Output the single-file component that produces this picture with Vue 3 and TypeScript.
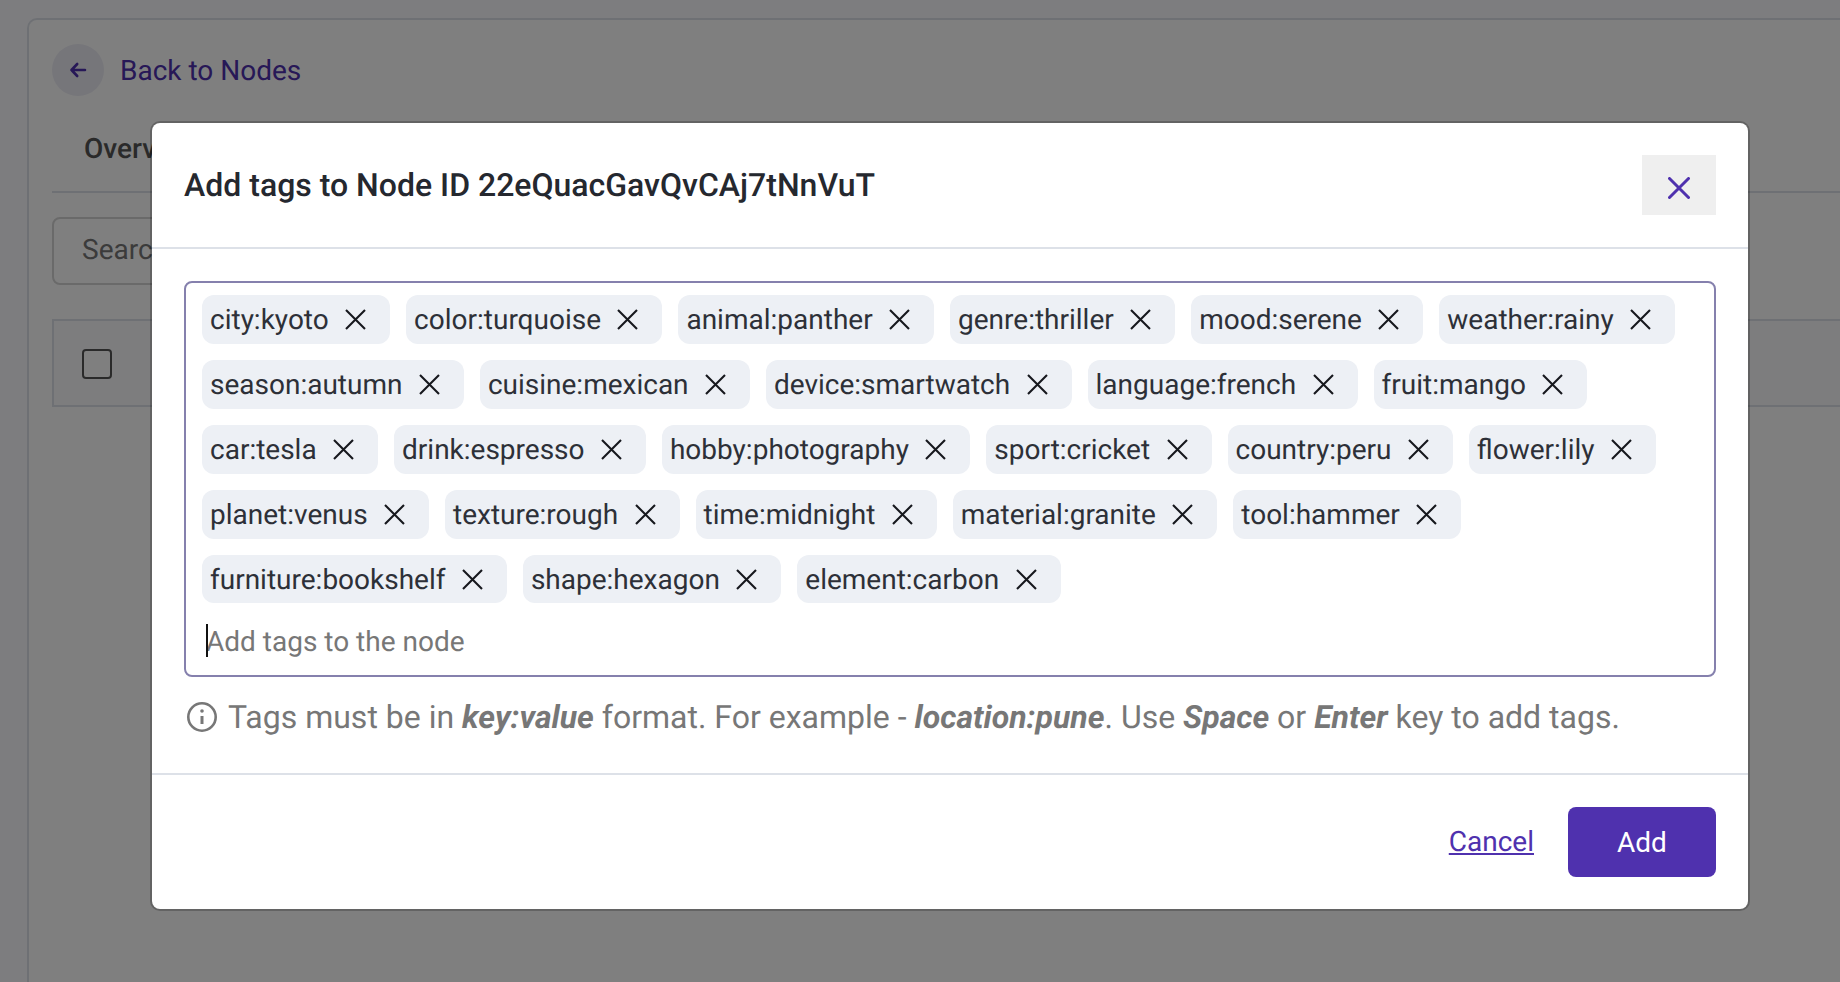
<script setup lang="ts">
const tags: string[] = [
  'city:kyoto', 'color:turquoise', 'animal:panther', 'genre:thriller', 'mood:serene', 'weather:rainy',
  'season:autumn', 'cuisine:mexican', 'device:smartwatch', 'language:french', 'fruit:mango',
  'car:tesla', 'drink:espresso', 'hobby:photography', 'sport:cricket', 'country:peru', 'flower:lily',
  'planet:venus', 'texture:rough', 'time:midnight', 'material:granite', 'tool:hammer',
  'furniture:bookshelf', 'shape:hexagon', 'element:carbon',
]
</script>

<template>
  <div class="page">
    <div class="card">
      <div class="back">
        <span class="back-circle">
          <svg width="18" height="18" viewBox="0 0 18 18" fill="none" stroke="#4f31ae" stroke-width="2.6" stroke-linecap="round" stroke-linejoin="round">
            <path d="M16 9H2.5M8.2 3 2.5 9 8.2 15" />
          </svg>
        </span>
        <span class="back-label">Back to Nodes</span>
      </div>
      <div class="tabs"><span class="tab">Overview</span></div>
      <div class="search">Search</div>
      <div class="table-head"><span class="checkbox"></span></div>
    </div>

    <div class="overlay">
      <div class="modal">
        <header class="modal-head">
          <h2 class="modal-title">Add tags to Node ID 22eQuacGavQvCAj7tNnVuT</h2>
          <button class="close">
            <svg width="22" height="22" viewBox="0 0 22 22" fill="none" stroke="#4f31ae" stroke-width="3" stroke-linecap="round">
              <path d="M1.5 1.5 20.5 20.5M20.5 1.5 1.5 20.5" />
            </svg>
          </button>
        </header>

        <div class="modal-body">
          <div class="field">
            <span v-for="tag in tags" :key="tag" class="tag">
              <span>{{ tag }}</span>
              <svg class="tag-x" width="21" height="21" viewBox="0 0 21 21" fill="none" stroke="#16181d" stroke-width="2.1">
                <path d="M1 1 20 20M20 1 1 20" />
              </svg>
            </span>
            <div class="entry"><span class="caret"></span>Add tags to the node</div>
          </div>
          <p class="hint">
            <svg width="32" height="32" viewBox="0 0 32 32" fill="none" stroke="#777" stroke-width="2.6">
              <circle cx="16" cy="16" r="13.7" />
              <path d="M16 15v8" stroke-width="3" />
              <circle cx="16" cy="10" r="1.8" fill="#777" stroke="none" />
            </svg>
            <span>Tags must be in <b>key:value</b> format. For example - <b>location:pune</b>. Use <b>Space</b> or <b>Enter</b> key to add tags.</span>
          </p>
        </div>

        <footer class="modal-foot">
          <a class="cancel">Cancel</a>
          <button class="add">Add</button>
        </footer>
      </div>
    </div>
  </div>
</template>

<style>
html, body {
  margin: 0;
  height: 100%;
  overflow: hidden;
}
</style>

<style scoped>
.page {
  position: relative;
  height: 982px;
  padding: 18px 0 0 27px;
  box-sizing: border-box;
  background: #fbfbff;
  font-family: Roboto, "Liberation Sans", sans-serif;
  text-rendering: geometricPrecision;
  color: #25282f;
  overflow: hidden;
}

.card {
  height: 100%;
  padding: 24px 0 0 23px;
  box-sizing: border-box;
  background: #fff;
  border: 2px solid #dde1e8;
  border-right: 0;
  border-bottom: 0;
  border-top-left-radius: 10px;
}

.back {
  display: flex;
  align-items: center;
  gap: 16px;
}

.back-circle {
  width: 52px;
  height: 52px;
  border-radius: 50%;
  background: #ededf5;
  display: flex;
  align-items: center;
  justify-content: center;
}

.back-label {
  font-size: 28px;
  color: #4f31ae;
}

.tabs {
  margin-top: 28px;
  height: 67px;
  padding-left: 32px;
  border-bottom: 2px solid #dde1e8;
}

.tab {
  font-size: 28px;
  font-weight: 500;
  line-height: 50px;
  color: #555;
}

.search {
  margin-top: 24px;
  width: 560px;
  height: 68px;
  padding-left: 28px;
  box-sizing: border-box;
  border: 2px solid #d4d4d4;
  border-radius: 8px;
  font-size: 28px;
  line-height: 62px;
  color: #777;
}

.table-head {
  margin-top: 34px;
  height: 88px;
  padding-left: 28px;
  padding-top: 2px;
  box-sizing: border-box;
  display: flex;
  align-items: center;
  background: #fafafd;
  border: 2px solid #dde1e8;
  border-right: 0;
}

.checkbox {
  width: 30px;
  height: 30px;
  box-sizing: border-box;
  border: 2px solid #555;
  border-radius: 4px;
  background: #fff;
}

.overlay {
  position: absolute;
  inset: 0;
  padding: 123px 92px 73px 152px;
  box-sizing: border-box;
  background: rgba(0, 0, 0, 0.5);
}

.modal {
  height: 100%;
  background: #fff;
  border-radius: 8px;
  box-shadow: 0 0 0 2px rgba(0, 0, 0, 0.22);
  display: flex;
  flex-direction: column;
}

.modal-head {
  height: 124px;
  padding: 0 32px;
  display: flex;
  align-items: center;
  justify-content: space-between;
  border-bottom: 2px solid #dde1e8;
}

.modal-title {
  margin: 0;
  font-size: 32px;
  font-weight: 500;
}

.close {
  width: 74px;
  height: 60px;
  border: 0;
  padding: 6px 0 0;
  background: #efefef;
  display: flex;
  align-items: center;
  justify-content: center;
}

.modal-body {
  flex: 1;
  padding: 32px 32px 0 32px;
}

.field {
  display: flex;
  flex-wrap: wrap;
  gap: 16px;
  height: 396px;
  padding: 12px 16px 0;
  box-sizing: border-box;
  align-content: flex-start;
  border: 2px solid #8580ad;
  border-radius: 8px;
}

.tag {
  height: 48.9px;
  padding: 0 24px 0 8px;
  border-radius: 12px;
  background: #edf0f5;
  color: #2d3038;
  display: flex;
  align-items: center;
  font-size: 28px;
}

.tag-x {
  margin-left: 16.4px;
}

.entry {
  width: 100%;
  margin-top: 5px;
  height: 34px;
  padding-left: 4px;
  position: relative;
  display: flex;
  align-items: center;
  font-size: 28px;
  color: #777;
}

.caret {
  position: absolute;
  left: 4px;
  top: 0;
  width: 2px;
  height: 33px;
  background: #111;
}

.hint {
  margin: 21px 0 0 2px;
  display: flex;
  align-items: center;
  gap: 10px;
  font-size: 32px;
  color: #777;
}

.hint b {
  font-style: italic;
  font-weight: 700;
}

.modal-foot {
  height: 136px;
  padding: 0 32px;
  box-sizing: border-box;
  display: flex;
  align-items: center;
  justify-content: flex-end;
  gap: 34px;
  border-top: 2px solid #dde1e8;
}

.cancel {
  padding-bottom: 2px;
  font-size: 28px;
  color: #4f31ae;
  text-decoration: underline;
}

.add {
  width: 148px;
  height: 70px;
  border: 0;
  border-radius: 8px;
  background: #4f31ae;
  color: #fff;
  font-family: inherit;
  font-size: 28px;
}
</style>
